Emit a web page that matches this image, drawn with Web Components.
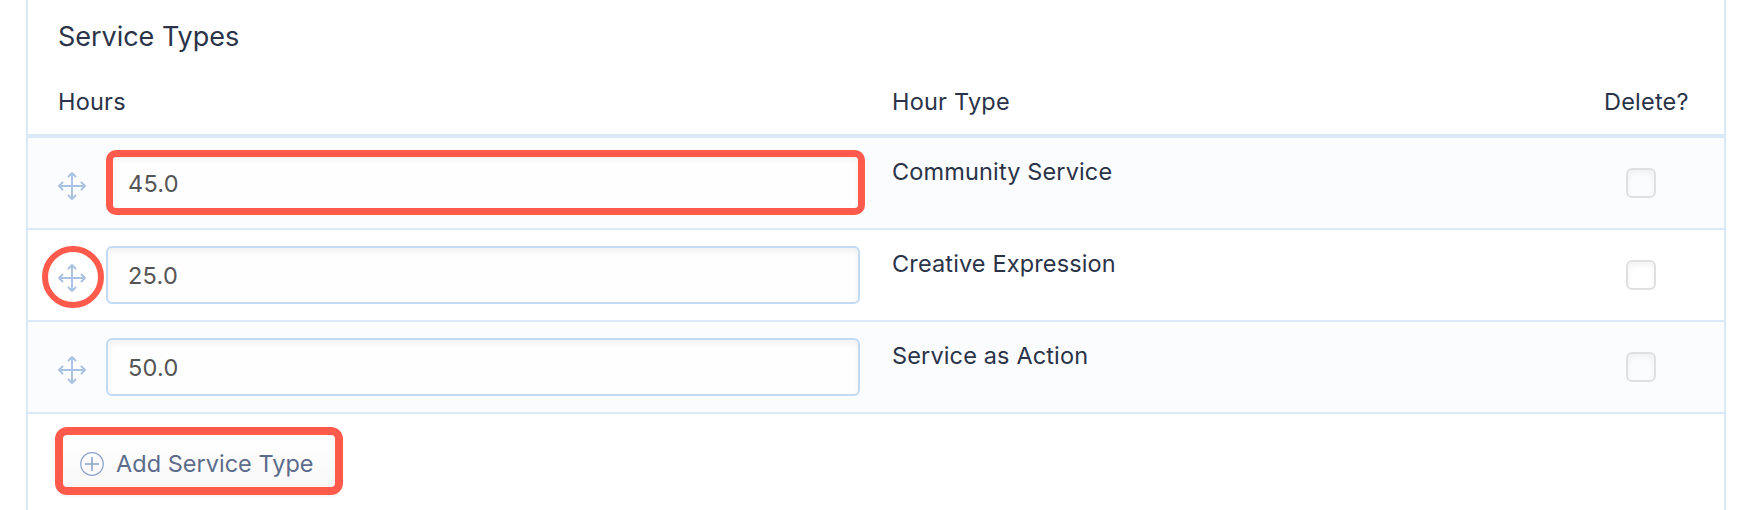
<!DOCTYPE html>
<html lang="en">
<head>
<meta charset="utf-8">
<title>Service Types</title>
<style>
    html, body {
        margin: 0;
        height: 510px;
        overflow: hidden;
        background: #fff;
    }

    body {
        font-family: Inter, "Liberation Sans", sans-serif;
        font-size: 23.5px;
        color: #2a3348;
        --line: #dae8f7;
        --accent: #ff5a4b;
    }
</style>
</head>
<body>
<service-panel>
    <span slot="title">Service Types</span>
    <span slot="hours">Hours</span>
    <span slot="type">Hour Type</span>
    <span slot="delete">Delete?</span>
    <service-row class="odd" value="45.0" highlight="input">Community Service</service-row>
    <service-row value="25.0" highlight="handle">Creative Expression</service-row>
    <service-row class="odd" value="50.0">Service as Action</service-row>
    <add-button slot="footer">Add Service Type</add-button>
</service-panel>

<script>
/**
 * Panel with the header and the list of service types
 */
class ServicePanel extends HTMLElement {
    constructor() {
        super();
        this.attachShadow({ mode: 'open' });
    }

    connectedCallback() {
        this.shadowRoot.innerHTML = `
            <style>
                :host {
                    display: block;
                    box-sizing: border-box;
                    height: 510px;
                    margin: 0 26px;
                    border: solid var(--line);
                    border-width: 0 2px;
                }

                .title {
                    box-sizing: border-box;
                    height: 72px;
                    padding: 1px 0 0 30px;
                    font-size: 27px;
                    line-height: 72px;
                    letter-spacing: -0.03px;
                }

                .head {
                    display: grid;
                    grid-template-columns: 848px 1fr 136px;
                    height: 62px;
                    line-height: 60px;
                    letter-spacing: 0.22px;
                    border-bottom: 4px solid var(--line);
                }

                .hours {
                    padding-left: 30px;
                }

                .type,
                .delete {
                    padding-left: 16px;
                }

                .footer {
                    padding: 13px 0 0 27px;
                }
            </style>

            <div class="title"><slot name="title"></slot></div>
            <div class="head">
                <div class="hours"><slot name="hours"></slot></div>
                <div class="type"><slot name="type"></slot></div>
                <div class="delete"><slot name="delete"></slot></div>
            </div>
            <slot></slot>
            <div class="footer"><slot name="footer"></slot></div>
        `;
    }
}

/**
 * Drag handle with four arrows
 */
class MoveHandle extends HTMLElement {
    constructor() {
        super();
        this.attachShadow({ mode: 'open' });
    }

    connectedCallback() {
        this.shadowRoot.innerHTML = `
            <style>
                :host {
                    display: block;
                    position: relative;
                    width: 28px;
                    height: 28px;
                }

                svg {
                    display: block;
                }

                :host([ring])::after {
                    content: '';
                    position: absolute;
                    box-sizing: border-box;
                    left: -16px;
                    top: -18px;
                    width: 62px;
                    height: 62px;
                    border: 6px solid var(--accent);
                    border-radius: 50%;
                }
            </style>
            <svg width="28" height="28" viewBox="0 0 28 28" fill="none" stroke="#a9c1e4" stroke-width="1.9" stroke-linecap="round" stroke-linejoin="round">
                <path d="M14 1v26M1 14h26M10.5 4.5 14 1l3.5 3.5M10.5 23.5 14 27l3.5-3.5M4.5 10.5 1 14l3.5 3.5M23.5 10.5 27 14l-3.5 3.5"/>
            </svg>
        `;
    }
}

/**
 * One service type: handle, hours field, name and delete checkbox
 */
class ServiceRow extends HTMLElement {
    constructor() {
        super();
        this.attachShadow({ mode: 'open' });
    }

    connectedCallback() {
        const value = this.getAttribute('value') || '';
        const highlight = this.getAttribute('highlight');

        this.shadowRoot.innerHTML = `
            <style>
                :host {
                    display: grid;
                    grid-template-columns: 848px 1fr 136px;
                    height: 90px;
                    border-bottom: 2px solid var(--line);
                }

                :host(.odd) {
                    background: #fbfcfe;
                }

                .hours {
                    display: grid;
                    grid-template-columns: 48px 1fr;
                    padding: 16px 16px 16px 30px;
                }

                move-handle {
                    margin-top: 18px;
                }

                .field {
                    position: relative;
                }

                input {
                    box-sizing: border-box;
                    display: block;
                    width: 100%;
                    height: 58px;
                    margin: 0;
                    padding: 0 0 0 20px;
                    border: 2px solid #c3daf5;
                    border-radius: 6px;
                    background: #fefefe;
                    box-shadow: inset 0 3px 6px rgba(0, 0, 0, 0.06);
                    font: inherit;
                    letter-spacing: 0.25px;
                    color: #555;
                    outline: none;
                }

                .field.marked::after {
                    content: '';
                    position: absolute;
                    box-sizing: border-box;
                    inset: -4.5px -4.7px -2.7px -0.3px;
                    border: 7px solid var(--accent);
                    border-radius: 10px;
                }

                .name {
                    padding: 16px 0 0 16px;
                    line-height: 36px;
                    letter-spacing: 0.14px;
                }

                .check {
                    box-sizing: border-box;
                    width: 30px;
                    height: 30px;
                    margin: 30px 0 0 38px;
                    border: 2px solid #e0e0e0;
                    border-radius: 6px;
                    background: none;
                    box-shadow: inset 0 3px 6px rgba(0, 0, 0, 0.05);
                    appearance: none;
                }
            </style>

            <div class="hours">
                <move-handle ${highlight === 'handle' ? 'ring' : ''}></move-handle>
                <div class="field ${highlight === 'input' ? 'marked' : ''}">
                    <input type="text" value="${value}">
                </div>
            </div>
            <div class="name"><slot></slot></div>
            <input class="check" type="checkbox" aria-label="Delete">
        `;
    }
}

class AddButton extends HTMLElement {
    constructor() {
        super();
        this.attachShadow({ mode: 'open' });
    }

    connectedCallback() {
        this.shadowRoot.innerHTML = `
            <style>
                :host {
                    display: block;
                }

                button {
                    display: flex;
                    align-items: center;
                    gap: 12px;
                    box-sizing: border-box;
                    width: 288px;
                    height: 68px;
                    padding: 0 0 0 17px;
                    border: 8px solid var(--accent);
                    border-radius: 12px;
                    background: linear-gradient(#fff, #f8f8f9) padding-box;
                    box-shadow: 0 2px 3px rgba(0, 0, 0, 0.04);
                    font: inherit;
                    letter-spacing: 0.02px;
                    white-space: nowrap;
                    color: #5c6c8a;
                }

                svg {
                    flex: none;
                    margin-top: 6px;
                }

                .label {
                    padding-top: 5px;
                }
            </style>
            <button type="button">
                <svg width="24" height="24" viewBox="0 0 24 24" fill="none" stroke="#8ba3c9" stroke-width="1.2">
                    <circle cx="12" cy="12" r="11.3"/>
                    <path d="M12 5v14M5 12h14" stroke-width="1.6"/>
                </svg>
                <span class="label"><slot></slot></span>
            </button>
        `;
    }
}

customElements.define('move-handle', MoveHandle);
customElements.define('service-row', ServiceRow);
customElements.define('add-button', AddButton);
customElements.define('service-panel', ServicePanel);
</script>
</body>
</html>
